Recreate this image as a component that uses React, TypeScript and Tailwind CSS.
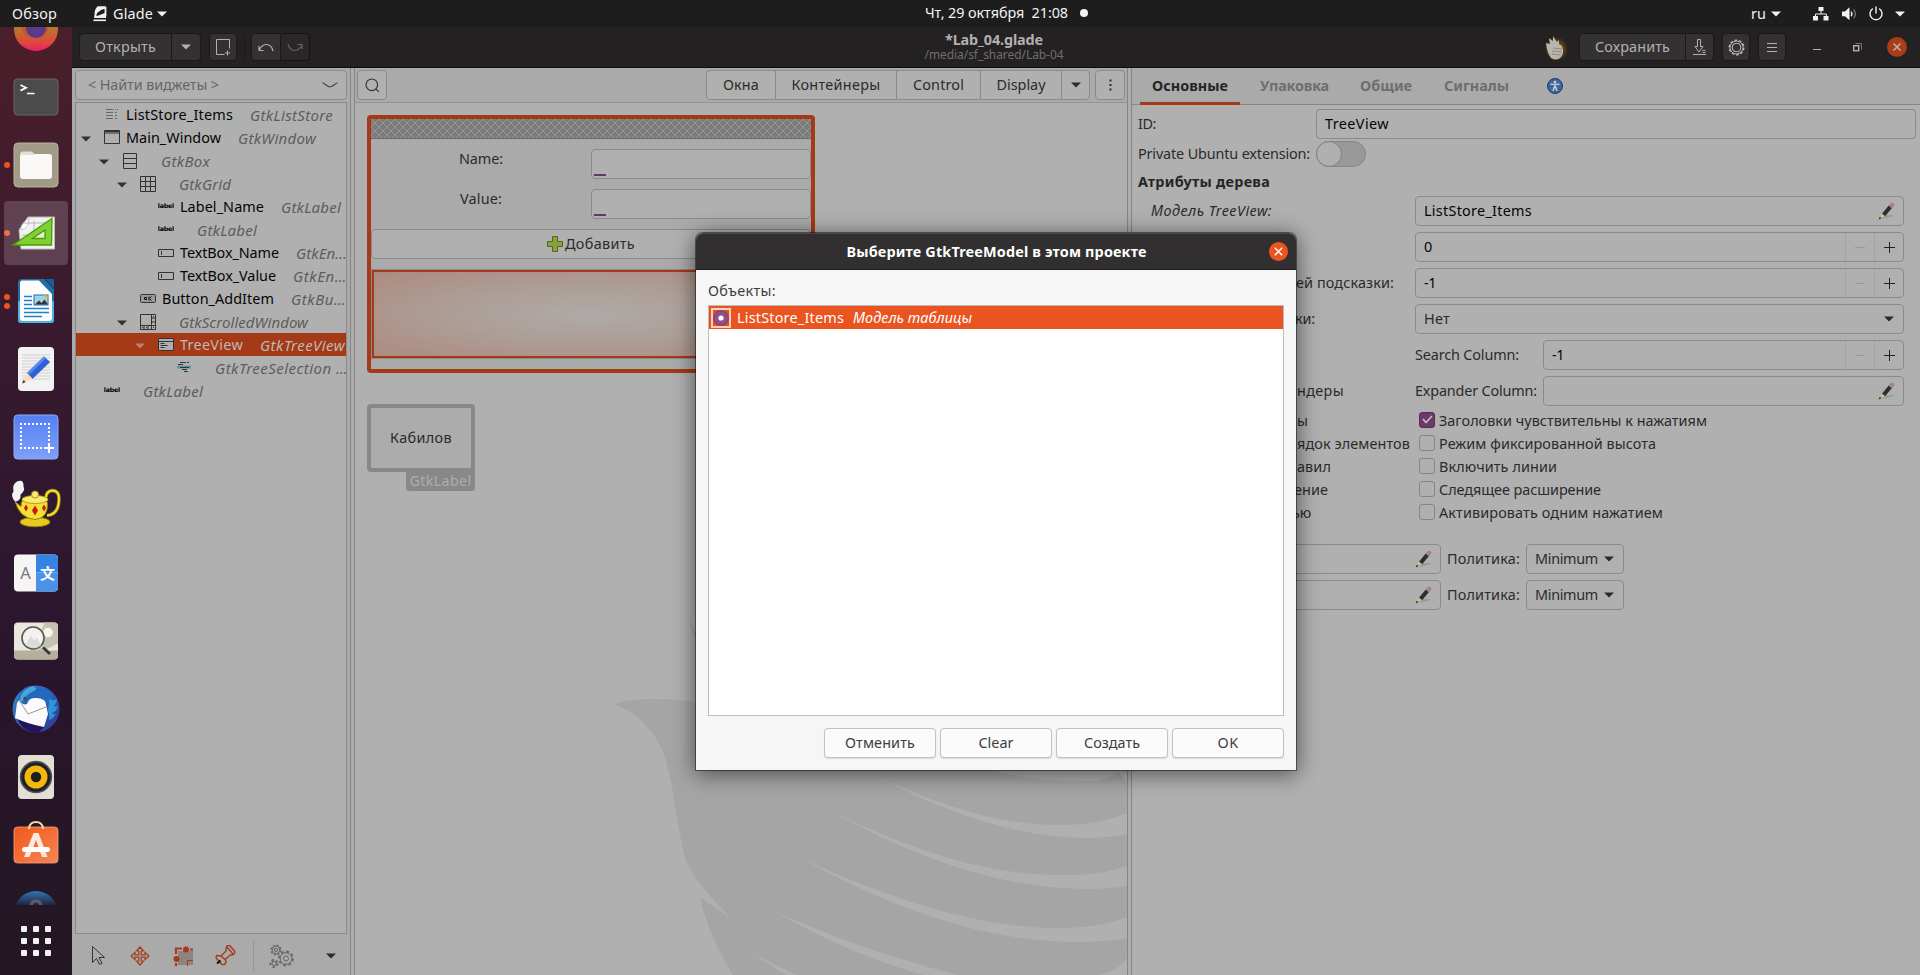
import React, { useLayoutEffect, useRef } from "react";

type FitProps = { w: number; children: string; className?: string };

/** A run of text whose tracking is adjusted so that it takes `w` pixels. */
function Fit({ w, children, className = "" }: FitProps) {
  const ref = useRef<HTMLSpanElement>(null);
  useLayoutEffect(() => {
    const el = ref.current;
    if (!el) return;
    el.style.letterSpacing = "0px";
    const natural = el.getBoundingClientRect().width;
    el.style.letterSpacing = `${(w - natural) / children.length}px`;
  }, [w, children]);
  return (
    <span ref={ref} className={`inline-block shrink-0 whitespace-pre ${className}`}>
      {children}
    </span>
  );
}

function Caret({ className = "text-[#2b2b2b]" }: { className?: string }) {
  return (
    <svg width="10" height="6" viewBox="0 0 10 6" className={`shrink-0 ${className}`}>
      <path d="M0 .5h10L5 5.6z" fill="currentColor" />
    </svg>
  );
}

/* ---------- top panel ---------- */

function TopBar() {
  return (
    <div className="relative flex h-[27px] shrink-0 items-center bg-[#1d1d1d] text-[#f2f2f2]">
      <Fit w={45} className="ml-3">Обзор</Fit>
      <svg width="14" height="16" viewBox="0 0 14 16" className="ml-9 shrink-0">
        <path d="M5 1.500h7.500v8.500L7 10.800 2 10.500z" fill="none" stroke="#f2f2f2" strokeWidth="1.800" strokeLinejoin="round" />
        <path d="M4.500.6h8v2L8 4 5.500 6 1.500 8.500Q1.500 3 4.500.6z M1 11.500 8 8.500l5-2v5.500H1z" fill="#f2f2f2" />
        <path d="M.5 14.300h12.500" stroke="#f2f2f2" strokeWidth="1.600" />
      </svg>
      <Fit w={40} className="ml-[6px]">Glade</Fit>
      <Caret className="ml-1 text-[#f2f2f2]" />
      <div className="absolute inset-x-0 top-0 flex h-[26px] items-center pl-[925px]">
        <Fit w={143}>Чт, 29 октября  21:08</Fit>
        <span className="ml-3 size-2 rounded-full bg-[#f2f2f2]" />
      </div>
      <div className="ml-auto flex items-center pr-[15px]">
        <Fit w={15}>ru</Fit>
        <Caret className="ml-[5px]" />
        <svg width="16" height="14" viewBox="0 0 16 14" className="ml-8">
          <path d="M5.500 0h5v4h-5zM0 9h5v4.500H0zM10.500 9h5v4.500h-5z" fill="#f2f2f2" />
          <path d="M8 4v3M2.500 9.500V7h10.800v2.500" fill="none" stroke="#f2f2f2" />
        </svg>
        <svg width="16" height="14" viewBox="0 0 16 14" className="ml-[13px]">
          <path d="M0 4.500h3L7.500.3v13L3 9.200H0z" fill="#f2f2f2" />
          <path d="M9 4.800q2 2.200 0 4.500" fill="none" stroke="#f2f2f2" strokeWidth="1.300" />
          <path d="M11.500 2.500q3.800 4.400 0 8.800" fill="none" stroke="#777" strokeWidth="1.300" />
        </svg>
        <svg width="14" height="15" viewBox="0 0 14 15" className="ml-[11px]">
          <path d="M3.800 2.600a6 6 0 1 0 6.400 0M7 .5v7" fill="none" stroke="#f2f2f2" strokeWidth="1.400" />
        </svg>
        <Caret className="ml-3 text-[#f2f2f2]" />
      </div>
    </div>
  );
}

/* ---------- dock ---------- */

const dockIcons: { dots: number; active?: boolean; art: React.ReactNode }[] = [
  {
    dots: 0,
    art: (
      <>
        <circle cx="24" cy="24" r="22" fill="url(#fox)" />
        <circle cx="23" cy="20" r="14" fill="#c4572f" />
        <circle cx="24" cy="23" r="10" fill="#5b3a8c" />
      </>
    ),
  },
  {
    dots: 0,
    art: (
      <>
        <rect x="2" y="6" width="44" height="36" rx="3.500" fill="#4b4b4b" stroke="#696969" />
        <path d="m8.500 12 5.500 2.800-5.500 2.800" fill="none" stroke="#fff" strokeWidth="1.800" />
        <path d="M15 20.500h7.500" stroke="#fff" strokeWidth="1.500" />
      </>
    ),
  },
  {
    dots: 1,
    art: (
      <>
        <rect x="2" y="2" width="44" height="44" rx="4" fill="#a09a86" stroke="#b9b39f" />
        <path d="M8 14q0-3.500 3-3.500h9l3 3h14q3 0 3 3v8H8z" fill="#e3dfd3" />
        <path d="M8 16q0-2 2-2h10q2 0 3-1h14q3 0 3 3v19q0 3-3 3H11q-3 0-3-3z" fill="#faf9f7" />
      </>
    ),
  },
  {
    dots: 1,
    active: true,
    art: (
      <>
        <path d="M7 21 16 8h26.500v32H9z" fill="#f1f1f1" stroke="#bbb" />
        <path d="M9 21q8-1 8-12.500l-4 4q-5 4-4 8.500z" fill="#fff" stroke="#bbb" strokeWidth=".8" />
        <path d="M10 14h28M10 26h10M22 12v10" stroke="#aaa" strokeWidth=".8" />
        <path d="M1 36 40 9.500 39.500 36z" fill="#7fd032" stroke="#4e9a06" strokeWidth="1.300" />
        <path d="M20.500 29.500 33 21v8.500z" fill="#e2efd8" stroke="#4e9a06" strokeWidth="1.300" />
      </>
    ),
  },
  {
    dots: 2,
    art: (
      <>
        <path d="M10 2h22l10 10v31q0 3-3 3H9q-3 0-3-3V6q0-4 4-4z" fill="#1c71a8" />
        <path d="M6 24h36v19q0 3-3 3H9q-3 0-3-3z" fill="#4fb4e0" />
        <path d="M9.500 3.500H27L40 17v24q0 3-3 3H11q-3 0-3-3V6q0-2 1.500-2.500z" fill="#fcfcfc" />
        <path d="M33 2h9v9z" fill="#12609a" />
        <path d="M12 19.500h8M12 23.500h8M12 27.500h8M12 31.500h25M12 35.500h25M12 39.500h18" stroke="#1c84c6" strokeWidth="1.500" />
        <rect x="22" y="18" width="14" height="10" fill="#9ed2f0" stroke="#1c71a8" />
        <path d="m23 27.500 4-4 2.500 2.500 3-3.500 3.500 5z" fill="#333" />
        <path d="M31 18.500h4.500V23z" fill="#f3b61f" />
      </>
    ),
  },
  {
    dots: 0,
    art: (
      <>
        <rect x="6" y="2" width="36" height="44" rx="4" fill="#f2f2f2" />
        <path d="M10 10h28M10 13h28M10 16h28M10 19h28M10 22h28M10 25h28M10 28h28M10 31h28M10 34h28" stroke="#d0d0d0" />
        <path d="M15 28 32 11.500l6 5.500-17.500 17z" fill="#2f5fd8" />
        <path d="m15 28 17-16.500 2 1.800L17 30z" fill="#5b86ea" />
        <path d="m15 28 5.500 6L10.500 38z" fill="#fbdcbd" />
        <path d="m11.500 35 2.200 2L10 38.500z" fill="#333" />
      </>
    ),
  },
  {
    dots: 0,
    art: (
      <>
        <rect x="2" y="2" width="44" height="44" rx="3.500" fill="url(#shot)" stroke="#8fabfb" />
        <path d="M8 11h30M9 10v26M8 35h24M37 10v18" fill="none" stroke="#fff" strokeWidth="2" strokeDasharray="2 2" />
        <path d="M37 30v10M32 35h10" stroke="#fff" strokeWidth="2" />
      </>
    ),
  },
  {
    dots: 0,
    art: (
      <g transform="translate(0 1.500)">
        <path d="M34 15q0-6 6-7 7 0 7 8 0 16-12 17" fill="none" stroke="#9c8412" strokeWidth="3.500" />
        <path d="M34 15q0-6 6-7 7 0 7 8 0 16-12 17" fill="none" stroke="#f5dd2e" strokeWidth="2" />
        <ellipse cx="23" cy="39.500" rx="15" ry="4.800" fill="#e5cb1d" stroke="#927a0c" />
        <path d="M3 19 9 24q0-7 5-9l19 0q4 6 2 12-2 9-12 10Q8 36 3 19z" fill="#f4df35" stroke="#927a0c" />
        <ellipse cx="23" cy="17" rx="13" ry="4" fill="#f8ec6d" stroke="#a98f16" strokeWidth=".8" />
        <circle cx="23" cy="12" r="3.500" fill="#f9ed76" stroke="#a98f16" />
        <path d="m14 22 2 3.500-2 3.500-2-3.500zM23 23l3 5-3 5-3-5zM32 22l2 3.500-2 3.500-2-3.500z" fill="#c81717" />
        <path d="M3 19Q-2 13 1.500 9 0 2 5-1q7-3 6.500 5 2 4-3 8 1 6-5 7z" fill="#f3f3f3" />
      </g>
    ),
  },
  {
    dots: 0,
    art: (
      <g transform="translate(0 .5)">
        <rect x="2" y="5" width="44" height="37" rx="4" fill="#f6f5f4" />
        <path d="M24 5h18q4 0 4 4v14H24z" fill="#3584e4" />
        <path d="M24 23h22v15q0 4-4 4H24z" fill="#4a92e8" />
        <text x="13.500" y="29.500" textAnchor="middle" fontFamily="Noto Sans" fontSize="16.500" fill="#77767b">A</text>
        <text x="35.500" y="29" textAnchor="middle" fontFamily="Noto Sans CJK SC" fontSize="15" fontWeight="700" fill="#fff">文</text>
      </g>
    ),
  },
  {
    dots: 0,
    art: (
      <g transform="translate(0 .5)">
        <rect x="2" y="5" width="44" height="37" rx="4" fill="#e9e7de" />
        <path d="M33 5h9q4 0 4 4v17L30 34H18z" fill="#c6c2b0" />
        <path d="M2 33h44v5q0 4-4 4H6q-4 0-4-4z" fill="#b5af9c" />
        <circle cx="36" cy="15" r="4.800" fill="#f4f3ee" />
        <circle cx="21" cy="20.500" r="11" fill="#f3f2f0" stroke="#555" strokeWidth="1.600" />
        <path d="m14 27 5-9 3 5 3-3 4 8q-8 6-15-1z" fill="#dcdbd8" />
        <path d="m31 30 7 6.500" stroke="#3a3a3a" strokeWidth="3" />
      </g>
    ),
  },
  {
    dots: 0,
    art: (
      <>
        <circle cx="24" cy="24" r="23.500" fill="url(#bird)" />
        <path d="M6 31 14 34 33 41 26 48Q11 47 6 35z" fill="#23145c" />
        <path d="M5 18 9 13q3-4 9-1 9-2 15 3l3 14-4 13Q16 39 3 33z" fill="#fbfbfd" />
        <path d="m7 15 9 14 18-7" fill="none" stroke="#999" />
        <path d="M7 14q1-13 15-13 12 0 19 10-4 4 2 12-5 3-1 10-8-4-6-11-2-9-12-9-7-1-9 6-5 2-8-5z" fill="#2467bd" />
        <path d="M37 14q5 2 8 0-1 6-4 7 3 1 5 0-2 6-6 7 2 2 4 1-3 5-7 6 1-5-1-10 2-6 1-11z" fill="#2f93d6" />
        <path d="M8 16Q8 5 21 1q6 2 1 5-8 3-12 11z" fill="#45a6dc" />
        <circle cx="13" cy="13.500" r="1.700" fill="#543" />
      </>
    ),
  },
  {
    dots: 0,
    art: (
      <>
        <rect x="6" y="2" width="36" height="44" rx="4" fill="#e3dfd4" />
        <circle cx="24" cy="24" r="15.500" fill="#202125" stroke="#55555c" strokeWidth="1.500" />
        <circle cx="24" cy="24" r="11.500" fill="#f2b90c" />
        <circle cx="24" cy="24" r="5.200" fill="#1d1d20" />
      </>
    ),
  },
  {
    dots: 0,
    art: (
      <>
        <rect x="2" y="6" width="44" height="36" rx="3.500" fill="url(#soft)" stroke="#f8a27e" strokeWidth=".8" />
        <path d="M17 8V7q1-6 7-6t7 6v1" fill="none" stroke="#f0d9a3" strokeWidth="2" />
        <path d="M21.500 12h5l9 24h-5.500L24 19l-6.500 17H12z" fill="#fbe9e0" />
        <rect x="10" y="26" width="28" height="5" rx="2.500" fill="#fff" />
      </>
    ),
  },
  {
    dots: 0,
    art: (
      <>
        <circle cx="24" cy="24" r="22" fill="url(#help)" />
        <path d="M19 18q0-6 5-6t5 6" fill="none" stroke="#5d5a70" strokeWidth="3" />
      </>
    ),
  },
];

function Dock() {
  return (
    <div className="flex w-[72px] shrink-0 flex-col bg-[linear-gradient(180deg,#4b1f2a_0%,#3a1a2e_30%,#2f1830_52%,#29152b_70%,#231722_100%)]">
      <svg width="0" height="0" className="absolute">
        <defs>
          <linearGradient id="fox" x1="0" x2="0" y1="0" y2="1">
            <stop offset=".5" stopColor="#b8762f" />
            <stop offset=".8" stopColor="#e0483c" />
            <stop offset="1" stopColor="#ec1c6a" />
          </linearGradient>
          <linearGradient id="shot" x1="0" x2="0" y1="0" y2="1">
            <stop offset="0" stopColor="#557ff2" />
            <stop offset="1" stopColor="#7fa0fa" />
          </linearGradient>
          <linearGradient id="bird" x1="0" x2="1" y1="0" y2="1">
            <stop offset="0" stopColor="#2f8ad4" />
            <stop offset="1" stopColor="#30308f" />
          </linearGradient>
          <linearGradient id="soft" x1="0" x2="1" y1="0" y2="1">
            <stop offset="0" stopColor="#f2581c" />
            <stop offset="1" stopColor="#f58552" />
          </linearGradient>
          <linearGradient id="help" x1="0" x2="0" y1="0" y2="1">
            <stop offset="0" stopColor="#2f78b5" />
            <stop offset=".32" stopColor="#23223a" />
          </linearGradient>
        </defs>
      </svg>
      <div className="h-[878px] overflow-hidden">
        <div className="-mt-8 flex flex-col">
          {dockIcons.map((item, i) => (
            <div key={i} className="flex h-[68px] shrink-0 items-center">
              <div className="flex w-1 flex-col items-end gap-[3px] overflow-visible">
                {Array.from({ length: item.dots }, (_, d) => (
                  <span key={d} className="-mr-[6px] size-[6px] shrink-0 rounded-full bg-[#e95420]" />
                ))}
              </div>
              <div className={`flex size-16 items-center justify-center rounded-[4px] ${item.active ? "bg-white/17" : ""}`}>
                <svg width="48" height="48" viewBox="0 0 48 48" overflow="visible">
                  {item.art}
                </svg>
              </div>
            </div>
          ))}
        </div>
      </div>
      <div className="flex flex-1 items-center justify-center pt-[2px]">
        <div className="grid grid-cols-3 gap-[6px]">
          {Array.from({ length: 9 }, (_, i) => (
            <span key={i} className="size-[6px] rounded-[1px] bg-[#f2f2f2]" />
          ))}
        </div>
      </div>
    </div>
  );
}

/* ---------- window header ---------- */

const dark = "flex h-7 shrink-0 items-center justify-center bg-[#333132] border border-[#1a1819]";

function HeaderBar() {
  return (
    <div className="flex h-[41px] shrink-0 items-center border-b border-[#0e0d0d] bg-[#242122] text-[#b3b0b0]">
      <div className={`ml-[7px] w-[93px] rounded-l-[4px] ${dark}`}>
        <Fit w={61}>Открыть</Fit>
      </div>
      <div className={`w-[29px] rounded-r-[4px] border-l-0 ${dark}`}>
        <Caret className="text-[#b3b0b0]" />
      </div>
      <div className={`ml-2 w-7 rounded-[4px] ${dark}`}>
        <svg width="17" height="17" viewBox="0 0 17 17" fill="none" stroke="#b3b0b0">
          <path d="M9.500 15.500h-8v-15h13v9M12.500 11.500v5M10 14h5" />
        </svg>
      </div>
      <div className="ml-[7px] h-7 w-px bg-[#191718]" />
      <div className={`ml-[6px] w-[30px] rounded-l-[4px] ${dark}`}>
        <svg width="16" height="9" viewBox="0 0 16 9" fill="none" stroke="#b3b0b0" strokeWidth="1.200">
          <path d="M15 8Q13.500 1.500 8.500 1.500 4 1.500 1.500 6.500M1 3v4.500h4.500" />
        </svg>
      </div>
      <div className="flex h-7 w-[29px] shrink-0 items-center justify-center rounded-r-[4px] border border-l-0 border-[#151314] bg-[#2a2728]">
        <svg width="16" height="9" viewBox="0 0 16 9" fill="none" stroke="#636061" strokeWidth="1.200">
          <path d="M1 1q1.500 6.500 6.500 6.500 4.500 0 7-5M15 6V1.500h-4.500" />
        </svg>
      </div>
      <div className="flex flex-1 flex-col items-center pl-[135px]">
        <Fit w={98} className="h-[17px] leading-[17px] font-bold">*Lab_04.glade</Fit>
        <Fit w={139} className="h-[15px] text-[12px] leading-[14px] text-[#706d6e]">/media/sf_shared/Lab-04</Fit>
      </div>
      <svg width="24" height="28" viewBox="0 0 24 28" className="mr-3">
        <defs>
          <radialGradient id="glow">
            <stop offset=".5" stopColor="#6d4410" />
            <stop offset="1" stopColor="#6d4410" stopOpacity="0" />
          </radialGradient>
        </defs>
        <circle cx="13.500" cy="16" r="12" fill="url(#glow)" />
        <path d="M3 10 7 11 6 5l4 3V3l4 6 2-2 0 4 3 2q3 8-2 12-4 3-9 0-4-5-5-15z" fill="#b9b4ac" />
        <path d="m10 15 9 1M9 18l10 1M9 21l9 1" stroke="#918b82" />
      </svg>
      <div className={`w-[107px] rounded-l-[4px] ${dark}`}>
        <Fit w={75}>Сохранить</Fit>
      </div>
      <div className={`w-7 rounded-r-[4px] border-l-0 ${dark}`}>
        <svg width="14" height="16" viewBox="0 0 14 16" fill="none" stroke="#b3b0b0">
          <path d="M4.500.5h3v7h2.500L6 13 2 7.500h2.500zM9.500 11.500h3M9.500 13.500h3M0 15.500h13" />
        </svg>
      </div>
      <div className={`ml-2 w-7 rounded-[4px] ${dark}`}>
        <svg width="17" height="17" viewBox="0 0 17 17" fill="none" stroke="#b3b0b0">
          <circle cx="8.500" cy="8.500" r="7.200" strokeWidth="1.600" strokeDasharray="2.700 1.820" />
          <circle cx="8.500" cy="8.500" r="6.500" />
          <circle cx="8.500" cy="8.500" r="4.300" strokeWidth="1.100" />
        </svg>
      </div>
      <div className={`ml-2 w-7 rounded-[4px] ${dark}`}>
        <svg width="10" height="9" viewBox="0 0 10 9" stroke="#b3b0b0">
          <path d="M0 .5h10M0 4.500h10M0 8.500h10" />
        </svg>
      </div>
      <div className="mt-[5px] ml-[27px] h-px w-2 bg-[#b3b0b0]" />
      <svg width="9" height="9" viewBox="0 0 9 9" className="ml-8" fill="none">
        <rect x=".7" y="2.700" width="5" height="5" stroke="#b3b0b0" strokeWidth="1.400" />
        <path d="M2.500.5h6v6" stroke="#777" />
      </svg>
      <div className="mr-[13px] ml-[25px] flex size-5 items-center justify-center rounded-full bg-[#a83d18]">
        <svg width="8" height="8" viewBox="0 0 8 8" stroke="#bdb5b2" strokeWidth="1.500">
          <path d="m.5.500 7 7m0-7-7 7" />
        </svg>
      </div>
    </div>
  );
}

/* ---------- widget tree ---------- */

const ink = "#333";
const treeArt: Record<string, React.ReactNode> = {
  list: <path d="M2 2.500h7M2 5.500h7M2 8.500h7M2 11.500h7M11 2.500h1M13 2.500h1M11 5.500h2M11 8.500h2M11 11.500h2" stroke="#666" />,
  window: <path d="M.5.5h15v13H.5zM.5 3h15M1 1.500h14" fill="none" stroke={ink} />,
  box: <path d="M1.500.5h13v15h-13zM1.500 5.500h13M1.500 10.500h13" fill="none" stroke={ink} />,
  grid: <path d="M.5.5h15v15H.5zM5.500.5v15M10.500.5v15M.5 5.500h15M.5 10.500h15" fill="none" stroke={ink} />,
  label: (
    <text x="-.3" y="9.300" fontFamily="DejaVu Sans" fontSize="6.300" fontWeight="700" textLength="16.500" fill="#000">label</text>
  ),
  entry: <path d="M.5 4.500h15v7H.5zM3.500 6v4" fill="none" stroke={ink} />,
  button: (
    <>
      <rect x=".5" y="3.500" width="15" height="8" rx="1" fill="#9a9a9a" stroke={ink} />
      <path d="M4.500 6.500h2v2h-2zM9 5.500v4M11.500 5.500 9.500 7.500l2 2" fill="none" stroke="#111" />
    </>
  ),
  scrolled: (
    <path d="M.5.5h15v15H.5zM11.500.5v15M.5 11.500h15M11.500 4h4M11.500 8h4M4 11.500v4M8 11.500v4M13.500 2v1M13.500 13v1M2 13.500h1M6 13.500h1" fill="none" stroke={ink} />
  ),
  tree: <path d="M.5 1.500h15v12H.5zM.5 4.500h15M2.500 6.500h4M2.500 8.500h7M2.500 10.500h4" fill="none" stroke={ink} />,
  selection: (
    <>
      <path d="M1 5.500h14v3H1z" fill="#5f9aa0" />
      <path d="M4 2.500h6M11 2.500h2M2 4.500h5M4 7.500h9M6 9.500h5M8 11.500h4" stroke={ink} />
    </>
  ),
};

const indent = ["pl-px", "pl-[19px]", "pl-[37px]", "pl-[55px]", "pl-[73px]"];

type Row = { level: number; open?: boolean; icon: string; name?: [string, number]; kind: [string, number]; selected?: boolean };

const rows: Row[] = [
  { level: 0, icon: "list", name: ["ListStore_Items", 107], kind: ["GtkListStore", 83] },
  { level: 0, open: true, icon: "window", name: ["Main_Window", 95], kind: ["GtkWindow", 78] },
  { level: 1, open: true, icon: "box", kind: ["GtkBox", 49] },
  { level: 2, open: true, icon: "grid", kind: ["GtkGrid", 52] },
  { level: 3, icon: "label", name: ["Label_Name", 84], kind: ["GtkLabel", 60] },
  { level: 3, icon: "label", kind: ["GtkLabel", 60] },
  { level: 3, icon: "entry", name: ["TextBox_Name", 99], kind: ["GtkEn…", 51] },
  { level: 3, icon: "entry", name: ["TextBox_Value", 96], kind: ["GtkEn…", 54] },
  { level: 2, icon: "button", name: ["Button_AddItem", 112], kind: ["GtkBu…", 55] },
  { level: 2, open: true, icon: "scrolled", kind: ["GtkScrolledWindow", 129] },
  { level: 3, open: true, icon: "tree", name: ["TreeView", 63], kind: ["GtkTreeView", 85], selected: true },
  { level: 4, icon: "selection", kind: ["GtkTreeSelection …", 133] },
  { level: 0, icon: "label", kind: ["GtkLabel", 60] },
];

function TreeRow({ row }: { row: Row }) {
  return (
    <div className={`flex h-[23px] items-center ${indent[row.level]} ${row.selected ? "bg-[#a43a18] text-[#bfb8b5]" : "text-[#050505]"}`}>
      <div className="flex w-[18px] shrink-0 justify-center pt-[2px]">
        {row.open && <Caret className={row.selected ? "text-[#c27e68]" : "text-[#333]"} />}
      </div>
      <svg width="16" height="16" viewBox="0 0 16 16" className="mr-[6px] ml-[9px] shrink-0">
        {row.selected && <rect x=".5" y="1.500" width="15" height="12" fill="#adadad" />}
        {treeArt[row.icon]}
      </svg>
      {row.name && <Fit w={row.name[1]}>{row.name[0]}</Fit>}
      <Fit w={row.kind[1]} className={`ml-[17px] text-[15px] italic ${row.selected ? "" : "text-[#5d5d5d]"}`}>{row.kind[0]}</Fit>
    </div>
  );
}

function LeftPanel() {
  return (
    <div className="flex w-[278px] shrink-0 flex-col bg-[#aaa] pt-[2px] pl-[3px]">
      <div className="flex h-[30px] w-[272px] items-center justify-between rounded-[4px] border border-[#8a8a8a] bg-[#b0b0b0] pr-2 pl-3 text-[#666]">
        <Fit w={131}>{"< Найти виджеты >"}</Fit>
        <svg width="16" height="6" viewBox="0 0 16 6" fill="none" stroke="#3a3a3a" strokeWidth="1.100">
          <path d="M.5.600 6 4.200q2 1.200 4 0L15.500.6" />
        </svg>
      </div>
      <div className="mt-[2px] h-[832px] w-[272px] overflow-hidden border border-[#8a8a8a] bg-[#b0b0b0]">
        {rows.map((row, i) => (
          <TreeRow key={i} row={row} />
        ))}
      </div>
      <div className="flex flex-1 items-center pt-[2px]">
        <svg width="16" height="22" viewBox="0 0 16 22" className="ml-[16px]" fill="none" stroke="#333">
          <path d="M1.500 1.500v16l4-4 3 6 2.500-1.200-3-5.800h5.500z" strokeLinejoin="round" />
        </svg>
        <svg width="20" height="20" viewBox="0 0 20 20" className="ml-[23px]" fill="none" stroke="#a43a18" strokeWidth="1.200">
          <path d="m10 1 3.500 4h-2.300v3.800H15V6.500l4 3.500-4 3.500v-2.300h-3.800V15h2.300L10 19l-3.500-4h2.300v-3.800H5v2.300L1 10l4-3.500v2.300h3.800V5H6.500z" />
        </svg>
        <svg width="20" height="20" viewBox="0 0 20 20" className="ml-[23px]">
          <path d="M5 5h15v14H5z" fill="#8f8380" />
          <path d="M3 8V2.500h6M17 3.500h3M3 17v3" fill="none" stroke="#a43a18" strokeWidth="2.200" />
          <path d="M14.500 20v-5.500H20" fill="none" stroke="#a43a18" />
          <circle cx="13" cy="3.500" r="3" fill="#a43a18" />
          <circle cx="3.500" cy="13" r="3" fill="#a43a18" />
        </svg>
        <svg width="21" height="21" viewBox="0 0 21 21" className="ml-[22px]" fill="none" stroke="#a43a18" strokeWidth="1.400">
          <path d="M11.500 1.500q2-2 3.500-.5l4.500 5q1 2-1 3.500l-3 .5-5 4 .5 3.500-1.500 2q-2 .5-3-.5L1.500 13.500Q.5 12 2 10.500l4 .5 5-5z" strokeLinejoin="round" />
          <path d="m11.500 1.500 7 8M6 11l4.500 4" />
          <path d="m5.500 15.500-3.500 3" stroke="#111" strokeWidth="2" />
        </svg>
        <div className="ml-[17px] h-[30px] w-px bg-[#959595]" />
        <svg width="26" height="26" viewBox="0 0 26 26" className="ml-[15px]" fill="none" stroke="#666">
          <circle cx="7" cy="7" r="4.700" strokeWidth="1.600" strokeDasharray="2 1.690" />
          <circle cx="7" cy="7" r="3.800" />
          <circle cx="7" cy="7" r="1.600" />
          <circle cx="17" cy="15.500" r="7" strokeWidth="1.800" strokeDasharray="2.800 2.700" />
          <circle cx="17" cy="15.500" r="5.800" />
          <circle cx="17" cy="15.500" r="2.500" />
          <circle cx="5" cy="20.500" r="3.500" strokeDasharray="2.500 2" strokeWidth="2" />
          <circle cx="5" cy="20.500" r="2" />
        </svg>
        <Caret className="ml-[31px] text-[#2b2b2b]" />
      </div>
    </div>
  );
}

function Divider() {
  return <div className="w-[5px] shrink-0 border-x border-[#868686] bg-[#adadad]" />;
}

/* ---------- canvas ---------- */

const light = "border border-[#8a8a8a] bg-[#b0b0b0]";

function Watermark() {
  return (
    <svg width="772" height="872" viewBox="355 103 772 872" className="absolute inset-0">
      <path
        fill="#a5a5a5"
        d="M613 704Q628 699 655 699T697 703V640Q690 635 689.500 618L720 700H1127V975H733Q708 935 700 897 714 907 731 918 692 880 684 855 677 820 674 800 668 755 655 737 638 712 613 704z"
      />
      <g fill="#b0b0b0">
        <path d="M995 771Q1036 782 1094 781 1106 780 1119 772L1127 783V765H995z" />
        <path d="M871 773Q975 825 1059 825 1100 825 1127 813V834Q1108 838 1087 838 990 838 871 773z" />
        <path d="M833 812Q960 875 1059 875 1100 876 1127 866V886Q1108 889 1087 889 970 889 833 812z" />
        <path d="M801 858Q950 928 1059 928 1100 928 1127 917V938Q1104 942 1078 942 950 942 801 858z" />
        <path d="M774 911Q860 950 958 975H924Q850 955 774 911z" />
        <path d="M753 954 797 975H786z" />
        <path d="M1127 957Q1124 967 1100 975H1127z" />
      </g>
    </svg>
  );
}

function Toolbox() {
  return (
    <div className="flex h-[35px] shrink-0 items-start border-b border-[#949494] bg-[#aaa] px-[2px] pt-[2px] text-[#2b2b2b]">
      <div className={`flex h-[30px] w-[30px] items-center justify-center rounded-[4px] ${light}`}>
        <svg width="15" height="15" viewBox="0 0 15 15" fill="none" stroke="#333" strokeWidth="1.200">
          <circle cx="6.800" cy="6.800" r="5.800" />
          <path d="m10.800 10.800 3 3" />
        </svg>
      </div>
      <div className={`ml-auto flex h-[30px] items-center divide-x divide-[#8a8a8a] rounded-[4px] ${light}`}>
        <div className="flex h-full w-[69px] items-center justify-center"><Fit w={36}>Окна</Fit></div>
        <div className="flex h-full w-[121px] items-center justify-center"><Fit w={89}>Контейнеры</Fit></div>
        <div className="flex h-full w-[84px] items-center justify-center"><Fit w={51}>Control</Fit></div>
        <div className="flex h-full w-[81px] items-center justify-center"><Fit w={49}>Display</Fit></div>
        <div className="flex h-full w-[27px] items-center justify-center"><Caret /></div>
      </div>
      <div className={`ml-[5px] flex h-[30px] w-[30px] items-center justify-center rounded-[4px] ${light}`}>
        <svg width="3" height="12" viewBox="0 0 3 12" fill="#2b2b2b">
          <path d="M.5.500h2v2h-2zM.5 5h2v2h-2zM.5 9.500h2v2h-2z" />
        </svg>
      </div>
    </div>
  );
}

function GridField({ label, w }: { label: string; w: number }) {
  return (
    <div className="flex h-[40px] items-start">
      <div className="flex h-5 w-[220px] justify-center leading-5"><Fit w={w}>{label}</Fit></div>
      <div className={`flex h-[30px] w-[220px] items-end rounded-[4px] pb-[2px] pl-[2px] ${light}`}>
        <div className="h-[2px] w-3 bg-[#6a3566]" />
      </div>
    </div>
  );
}

function Canvas() {
  return (
    <div className="flex w-[772px] shrink-0 flex-col">
      <Toolbox />
      <div className="relative flex-1 overflow-hidden bg-[#b0b0b0] pt-3 pl-3 text-[#2b2b2b]">
        <Watermark />
        <div className="relative h-[258px] w-[448px] rounded-[4px] border-4 border-[#a43a18] bg-[#aaa]">
          <svg width="440" height="20" className="block border-b border-[#6c6c6c]">
            <defs>
              <pattern id="hatch" width="8" height="8" patternUnits="userSpaceOnUse">
                <path d="m0 0 8 8M8 0 0 8" stroke="#999" strokeWidth=".9" />
              </pattern>
            </defs>
            <rect width="440" height="20" fill="#7c7c7c" />
            <rect width="440" height="20" fill="url(#hatch)" />
          </svg>
          <div className="pt-[10px]">
            <GridField label="Name:" w={44} />
            <GridField label="Value:" w={42} />
          </div>
          <div className={`flex h-[30px] items-center justify-center gap-[2px] rounded-[4px] ${light}`}>
            <svg width="16" height="16" viewBox="0 0 16 16">
              <path d="M5.500.500h5v5h5v5h-5v5h-5v-5h-5v-5h5z" fill="#8aa03a" stroke="#4a6b1a" />
            </svg>
            <Fit w={70}>Добавить</Fit>
          </div>
          <div className="mt-[10px] h-[90px] border border-[#8a8a8a] bg-[#a43a18] p-[2px]">
            <div className="h-full bg-[radial-gradient(ellipse_at_center,#aeaaa8_0%,#ad9e97_45%,#ad8b7e_100%)]" />
          </div>
        </div>
        <div className="relative mt-[31px] flex w-[108px] flex-col items-end">
          <div className="flex h-[68px] w-full items-center justify-center rounded-[4px] rounded-br-none border-4 border-[#888] bg-[#acacac]">
            <Fit w={62}>Кабилов</Fit>
          </div>
          <div className="flex h-[19px] w-[69px] items-center justify-center rounded-b-[3px] bg-[#888] pb-[2px] text-[#adadad]">
            <Fit w={62}>GtkLabel</Fit>
          </div>
        </div>
      </div>
    </div>
  );
}

/* ---------- properties ---------- */

function Pencil() {
  return (
    <svg width="18" height="18" viewBox="1 .5 16.500 17" className="shrink-0">
      <path d="M4 15q6-3 12-2-2 2-11 3z" fill="#999" />
      <path d="m4.500 11.500 7-8.500 3 2.500-7 8.500z" fill="#2e2e2e" />
      <path d="m11.500 3 1.500-1.500q1-1 2.500.2 1.500 1.200.5 2.300L14.500 5.500z" fill="#b07aa0" />
      <path d="m10.800 3.800.8-1 3 2.600-.9 1z" fill="#999" />
      <path d="m4.500 11.500 3 2.500L2 16z" fill="#c9c08a" />
      <path d="m2.500 14.500 1.300 1L1.500 17z" fill="#111" />
    </svg>
  );
}

const entry = `flex h-[30px] items-center rounded-[4px] ${light}`;

function Spin({ value, w, className }: { value: string; w: number; className: string }) {
  return (
    <div className={`${entry} pl-2 text-[#050505] ${className}`}>
      <Fit w={w}>{value}</Fit>
      <div className="ml-auto flex h-full w-[29px] items-center justify-center border-l border-[#a2a2a2]">
        <div className="h-px w-[10px] bg-[#999]" />
      </div>
      <div className="flex h-full w-[29px] items-center justify-center border-l border-[#a2a2a2]">
        <svg width="11" height="11" viewBox="0 0 11 11" stroke="#222">
          <path d="M0 5.500h11M5.500 0v11" />
        </svg>
      </div>
    </div>
  );
}

const checks: { left: [string, number, string]; label: [string, number]; on?: boolean }[] = [
  { left: ["ы", 11, "w-[176px]"], label: ["Заголовки чувствительны к нажатиям", 268], on: true },
  { left: ["ядок элементов", 113, "w-[278px]"], label: ["Режим фиксированной высота", 217] },
  { left: ["авил", 34, "w-[199px]"], label: ["Включить линии", 118] },
  { left: ["ение", 34, "w-[196px]"], label: ["Следящее расширение", 162] },
  { left: ["ью", 19, "w-[179px]"], label: ["Активировать одним нажатием", 224] },
];

function Policy() {
  return (
    <div className="mt-[6px] flex h-[30px] items-center">
      <div className={`${entry} w-[309px] justify-end pr-[7px]`}>
        <Pencil />
      </div>
      <Fit w={73} className="ml-[6px]">Политика:</Fit>
      <div className={`${entry} ml-[6px] w-[98px] justify-between pr-[9px] pl-2`}>
        <Fit w={63}>Minimum</Fit>
        <Caret />
      </div>
    </div>
  );
}

function PropertiesPane() {
  return (
    <div className="flex flex-1 flex-col bg-[#b0b0b0] text-[#2b2b2b]">
      <div className="flex h-[37px] shrink-0 border-b border-[#868686] bg-[#aaa] pl-2 font-bold text-[#6e6e6e]">
        <div className="-mb-px flex w-[100px] items-center justify-center border-b-[3px] border-[#a43a18] pt-[2px] text-[#252525]">
          <Fit w={76}>Основные</Fit>
        </div>
        <div className="flex flex-1 items-center">
          <Fit w={69} className="ml-5">Упаковка</Fit>
          <Fit w={52} className="ml-[31px]">Общие</Fit>
          <Fit w={65} className="ml-[32px]">Сигналы</Fit>
          <svg width="16" height="16" viewBox="0 0 16 16" className="ml-[38px]">
            <circle cx="8" cy="8" r="7.500" fill="#3c669f" stroke="#1d3a66" />
            <circle cx="8" cy="4" r="1.300" fill="#ccc" />
            <path d="M3.500 6.300h9" stroke="#ccc" strokeWidth="1.300" />
            <path d="M8 6v4M7.500 8.500 6 13M8.500 8.500 10 13" stroke="#ccc" strokeWidth="1.500" fill="none" />
          </svg>
        </div>
      </div>
      <div className="mt-1 flex h-[30px] items-center pl-[6px]">
        <div className="w-[178px]"><Fit w={18}>ID:</Fit></div>
        <div className={`${entry} w-[600px] pl-2 text-[#050505]`}><Fit w={64}>TreeView</Fit></div>
      </div>
      <div className="mt-[2px] flex h-[26px] items-center pl-[6px]">
        <div className="w-[178px]"><Fit w={172}>Private Ubuntu extension:</Fit></div>
        <div className="flex h-[26px] w-[50px] rounded-full border border-[#858585] bg-[#999]">
          <div className="-mt-px -ml-px size-[26px] rounded-full border border-[#828282] bg-[#b0b0b0]" />
        </div>
      </div>
      <div className="mt-[3px] flex h-[23px] items-center pl-[6px] font-bold text-[#252525]">
        <Fit w={132}>Атрибуты дерева</Fit>
      </div>
      <div className="mt-[3px] flex flex-col gap-[6px]">
        <div className="flex h-[30px] items-center pl-[19px]">
          <div className="w-[264px]"><Fit w={121} className="italic">Модель TreeView:</Fit></div>
          <div className={`${entry} w-[489px] justify-between pr-[7px] pl-2 text-[#050505]`}>
            <Fit w={108}>ListStore_Items</Fit>
            <Pencil />
          </div>
        </div>
        <Spin value="0" w={9} className="ml-[283px] w-[489px]" />
        <div className="flex h-[30px] items-center">
          <div className="flex w-[262px] justify-end"><Fit w={98}>ей подсказки:</Fit></div>
          <Spin value="-1" w={12} className="ml-[21px] w-[489px]" />
        </div>
        <div className="flex h-[30px] items-center">
          <div className="flex w-[183px] justify-end"><Fit w={20}>ки:</Fit></div>
          <div className={`${entry} ml-[100px] w-[489px] justify-between pr-[9px] pl-2`}>
            <Fit w={26}>Нет</Fit>
            <Caret />
          </div>
        </div>
        <div className="flex h-[30px] items-center pl-[283px]">
          <Fit w={104}>Search Column:</Fit>
          <Spin value="-1" w={12} className="ml-6 w-[361px]" />
        </div>
        <div className="flex h-[30px] items-center">
          <div className="flex w-[212px] justify-end"><Fit w={47}>ндеры</Fit></div>
          <div className="ml-[71px] w-[128px]"><Fit w={122}>Expander Column:</Fit></div>
          <div className={`${entry} w-[361px] justify-end pr-[7px]`}><Pencil /></div>
        </div>
      </div>
      <div className="mt-[3px] flex flex-col">
        {checks.map((c, i) => (
          <div key={i} className="flex h-[23px] items-center">
            <div className="flex w-[287px]">
              <div className={`flex justify-end ${c.left[2]}`}><Fit w={c.left[1]}>{c.left[0]}</Fit></div>
            </div>
            <div className={`mb-[2px] flex size-4 items-center justify-center rounded-[3px] border ${c.on ? "border-[#5c2c59] bg-[#6d3869]" : "border-[#858585] bg-[#b0b0b0]"}`}>
              {c.on && (
                <svg width="11" height="9" viewBox="0 0 11 9" fill="none" stroke="#bbb" strokeWidth="1.800">
                  <path d="m1 4 3 3.500L10 1" />
                </svg>
              )}
            </div>
            <Fit w={c.label[1]} className="ml-1">{c.label[0]}</Fit>
          </div>
        ))}
      </div>
      <div className="mt-[14px]">
        <Policy />
        <Policy />
      </div>
    </div>
  );
}

/* ---------- dialog ---------- */

const actions: [string, number][] = [["Отменить", 70], ["Clear", 35], ["Создать", 56], ["OK", 21]];

function Dialog() {
  return (
    <div className="absolute top-[233px] left-[696px] flex h-[537px] w-[600px] flex-col rounded-t-[7px] bg-[#f6f6f6] text-[#3d3d3d] shadow-[0_0_0_1px_rgba(0,0,0,0.45),0_3px_22px_1px_rgba(0,0,0,0.55)]">
      <div className="flex h-[37px] shrink-0 items-center rounded-t-[7px] border-t border-b border-t-[#4a4848] border-b-[#1c1b1b] bg-[#312f30] text-white">
        <div className="flex flex-1 justify-center pl-[28px]">
          <Fit w={300} className="font-bold">Выберите GtkTreeModel в этом проекте</Fit>
        </div>
        <div className="mr-[8px] flex size-[19px] items-center justify-center rounded-full bg-[#e95420]">
          <svg width="9" height="9" viewBox="0 0 9 9" stroke="#fff" strokeWidth="1.500">
            <path d="m.8.800 7.400 7.400m0-7.400L.8 8.200" />
          </svg>
        </div>
      </div>
      <div className="flex flex-1 flex-col px-3 pt-[9px]">
        <Fit w={68} className="h-[23px] self-start leading-[23px]">Объекты:</Fit>
        <div className="mt-[3px] h-[411px] border border-[#bcbcbc] bg-white">
          <div className="flex h-[23px] items-center bg-[#e95420] pl-[2px] text-white">
            <svg width="20" height="20" viewBox="0 0 20 20">
              <rect x="1" y="1" width="18" height="18" fill="#d9541f" stroke="#fbd0c0" strokeWidth="2" />
              <circle cx="10" cy="10" r="7.300" fill="#924d8b" stroke="#7b3b62" />
              <circle cx="10" cy="10" r="2.600" fill="#fff" />
            </svg>
            <Fit w={107} className="ml-[6px]">ListStore_Items</Fit>
            <Fit w={119} className="ml-[9px] italic">Модель таблицы</Fit>
          </div>
        </div>
        <div className="mt-3 flex justify-end gap-1">
          {actions.map(([label, w]) => (
            <div key={label} className="flex h-[30px] w-[112px] items-center justify-center rounded-[4px] border border-[#c2c2c2] bg-[#fbfbfb] shadow-[0_1px_1px_rgba(0,0,0,0.12)]">
              <Fit w={w}>{label}</Fit>
            </div>
          ))}
        </div>
      </div>
    </div>
  );
}

export default function App() {
  return (
    <div className="relative flex h-[975px] w-[1920px] flex-col overflow-hidden font-['Noto_Sans',sans-serif] text-[14.4px] leading-5">
      <TopBar />
      <div className="flex min-h-0 flex-1">
        <Dock />
        <div className="flex min-w-0 flex-1 flex-col">
          <HeaderBar />
          <div className="flex min-h-0 flex-1">
            <LeftPanel />
            <Divider />
            <Canvas />
            <Divider />
            <PropertiesPane />
          </div>
        </div>
      </div>
      <Dialog />
    </div>
  );
}
